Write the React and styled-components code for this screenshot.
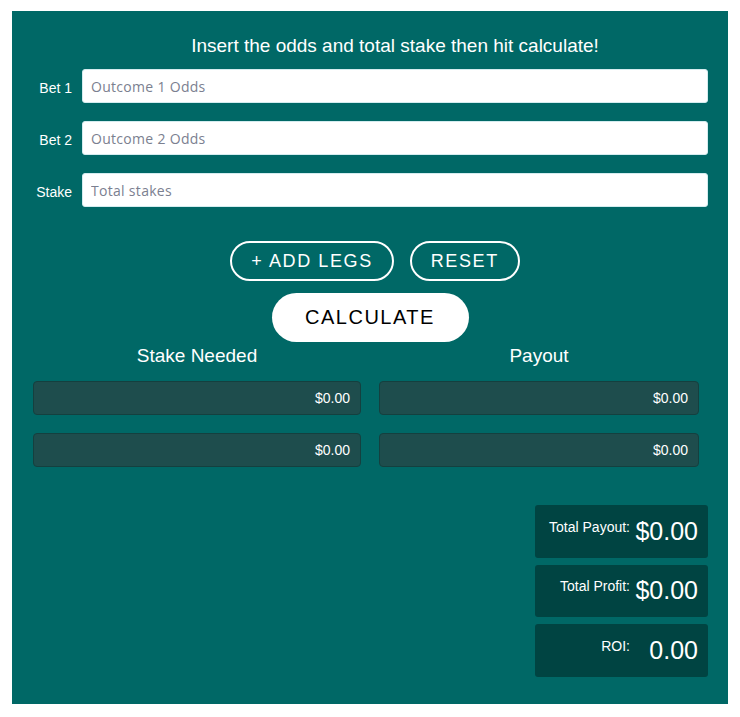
import React from "react";
import styled, { createGlobalStyle } from "styled-components";

const GlobalStyle = createGlobalStyle`
  body {
    margin: 0;
    background: #ffffff;
    font-family: "Liberation Sans", Arial, sans-serif;
  }
`;

const Page = styled.div`
  padding: 11px 12px 14px 12px;
`;

const Panel = styled.div`
  background: #006866;
  color: #ffffff;
  padding: 25px 20px 27px 0;
  display: flex;
  flex-direction: column;
`;

const FormGrid = styled.div`
  display: grid;
  grid-template-columns: 70px 1fr;
  row-gap: 18px;
  align-items: center;
`;

const Heading = styled.h2`
  grid-column: 2;
  margin: 0 0 -5px 0;
  font-size: 19px;
  font-weight: 400;
  line-height: 20px;
  text-align: center;
`;

const Label = styled.label`
  font-size: 14px;
  text-align: right;
  padding-right: 10px;
  padding-top: 4px;
`;

const Input = styled.input`
  height: 34px;
  box-sizing: border-box;
  border: 1px solid #d4ecef;
  border-radius: 3px;
  padding: 0 8px;
  font-family: "Open Sans", sans-serif;
  font-size: 14px;
  letter-spacing: 0.3px;
  color: #333;
  outline: none;
  &::placeholder {
    color: #7b8090;
  }
`;

const ButtonRow = styled.div`
  display: flex;
  justify-content: center;
  gap: 16px;
  margin-top: 34px;
  padding-left: 30px;
`;

const OutlineButton = styled.button`
  height: 40px;
  padding: 0 19px;
  background: transparent;
  border: 2px solid #ffffff;
  border-radius: 20px;
  color: #ffffff;
  font-family: "Liberation Sans", Arial, sans-serif;
  font-size: 18px;
  letter-spacing: 1.6px;
`;

const CalcButton = styled.button`
  align-self: center;
  margin: 12px 0 0 20px;
  height: 49px;
  width: 197px;
  background: #ffffff;
  border: none;
  border-radius: 25px;
  color: #000000;
  font-family: "Liberation Sans", Arial, sans-serif;
  font-size: 20px;
  letter-spacing: 1.5px;
`;

const Results = styled.div`
  display: grid;
  grid-template-columns: 328px 320px;
  column-gap: 18px;
  padding-left: 21px;
  margin-top: 4px;
`;

const Column = styled.div`
  display: flex;
  flex-direction: column;
  gap: 18px;
`;

const ColumnTitle = styled.div`
  font-size: 19px;
  line-height: 20px;
  text-align: center;
  margin-bottom: -3px;
`;

const OutBox = styled.div`
  height: 34px;
  box-sizing: border-box;
  background: #1e4d4d;
  border: 1px solid #14403f;
  border-radius: 4px;
  display: flex;
  align-items: center;
  justify-content: flex-end;
  padding-right: 10px;
  font-size: 14px;
`;

const Totals = styled.div`
  align-self: flex-end;
  width: 173px;
  display: flex;
  flex-direction: column;
  gap: 7px;
  margin-top: 38px;
`;

const TotalCard = styled.div`
  height: 52.5px;
  background: #004442;
  border-radius: 3px;
  display: flex;
  align-items: center;
  justify-content: flex-end;
  padding-right: 10px;
  gap: 5px;
`;

const TotalLabel = styled.span`
  font-size: 14px;
  padding-bottom: 9px;
`;

const TotalValue = styled.span`
  font-size: 25px;
  width: 63px;
  text-align: right;
`;

const rows = [
  { label: "Bet 1", placeholder: "Outcome 1 Odds" },
  { label: "Bet 2", placeholder: "Outcome 2 Odds" },
  { label: "Stake", placeholder: "Total stakes" },
];

const totals = [
  { label: "Total Payout:", value: "$0.00" },
  { label: "Total Profit:", value: "$0.00" },
  { label: "ROI:", value: "0.00" },
];

export default function App() {
  return (
    <Page>
      <GlobalStyle />
      <Panel>
        <FormGrid>
          <Heading>Insert the odds and total stake then hit calculate!</Heading>
          {rows.map((r) => (
            <React.Fragment key={r.label}>
              <Label>{r.label}</Label>
              <Input placeholder={r.placeholder} />
            </React.Fragment>
          ))}
        </FormGrid>
        <ButtonRow>
          <OutlineButton>+ ADD LEGS</OutlineButton>
          <OutlineButton>RESET</OutlineButton>
        </ButtonRow>
        <CalcButton>CALCULATE</CalcButton>
        <Results>
          <Column>
            <ColumnTitle>Stake Needed</ColumnTitle>
            <OutBox>$0.00</OutBox>
            <OutBox>$0.00</OutBox>
          </Column>
          <Column>
            <ColumnTitle>Payout</ColumnTitle>
            <OutBox>$0.00</OutBox>
            <OutBox>$0.00</OutBox>
          </Column>
        </Results>
        <Totals>
          {totals.map((t) => (
            <TotalCard key={t.label}>
              <TotalLabel>{t.label}</TotalLabel>
              <TotalValue>{t.value}</TotalValue>
            </TotalCard>
          ))}
        </Totals>
      </Panel>
    </Page>
  );
}
